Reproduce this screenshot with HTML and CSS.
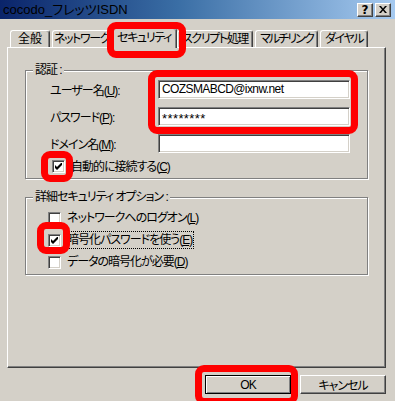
FILE: index.html
```html
<!DOCTYPE html>
<html lang="ja">
<head>
    <meta charset="UTF-8">
    <title>cocodo_フレッツISDN</title>
    <link rel="stylesheet" href="styles.css">
</head>
<body>
<div class="window">
    <!-- タイトルバー -->
    <div class="titlebar">
        <span class="title">cocodo_フレッツISDN</span>
        <div class="title-btns">
            <span class="tbtn">?</span>
            <span class="tbtn tbtn-close">
                <svg width="8" height="7" viewBox="0 0 8 7"><path d="M0 0h2l2 2.5L6 0h2L5 3.5 8 7H6L4 4.5 2 7H0l3-3.5z" fill="#000"/></svg>
            </span>
        </div>
    </div>

    <!-- タブ -->
    <div class="tabs">
        <div class="tab tab-general">全般</div>
        <div class="tab tab-network">ネットワーク</div>
        <div class="tab tab-security active">セキュリティ</div>
        <div class="tab tab-script">スクリプト処理</div>
        <div class="tab tab-multi">マルチリンク</div>
        <div class="tab tab-dial">ダイヤル</div>
    </div>

    <div class="panel">
        <!-- 認証 -->
        <div class="group group-auth">
            <span class="group-title">認証 :</span>
            <div class="field">
                <span class="field-label">ユーザー名(<u>U</u>):</span>
                <div class="input">COZSMABCD@ixnw.net</div>
            </div>
            <div class="field">
                <span class="field-label">パスワード(<u>P</u>):</span>
                <div class="input input-pass">********</div>
            </div>
            <div class="field">
                <span class="field-label">ドメイン名(<u>M</u>):</span>
                <div class="input"></div>
            </div>
            <div class="check-row check-auto">
                <span class="cb checked">
                    <svg width="7" height="7" viewBox="0 0 7 7"><path d="M0 2v3l2 2 5-5V-1L2 4z" fill="#000"/></svg>
                </span>
                <span class="check-label">自動的に接続する(<u>C</u>)</span>
            </div>
        </div>

        <!-- 詳細セキュリティ オプション -->
        <div class="group group-opts">
            <span class="group-title">詳細セキュリティ オプション :</span>
            <div class="check-row">
                <span class="cb"></span>
                <span class="check-label">ネットワークへのログオン(<u>L</u>)</span>
            </div>
            <div class="check-row">
                <span class="cb checked">
                    <svg width="7" height="7" viewBox="0 0 7 7"><path d="M0 2v3l2 2 5-5V-1L2 4z" fill="#000"/></svg>
                </span>
                <span class="check-label focused">暗号化パスワードを使う(<u>E</u>)</span>
            </div>
            <div class="check-row">
                <span class="cb"></span>
                <span class="check-label">データの暗号化が必要(<u>D</u>)</span>
            </div>
        </div>
    </div>

    <div class="buttons">
        <button class="btn btn-default">OK</button>
        <button class="btn">キャンセル</button>
    </div>

    <!-- 赤い囲み -->
    <div class="mark mark-tab"></div>
    <div class="mark mark-inputs"></div>
    <div class="mark mark-auto"></div>
    <div class="mark mark-encrypt"></div>
    <div class="mark mark-ok"></div>
</div>
</body>
</html>
```

FILE: styles.css
```css
body {
    margin: 0;
    padding: 0;
    background-color: #d4d0c8;
}
.window {
    position: relative;
    width: 395px;
    height: 401px;
    overflow: hidden;
    background-color: #d4d0c8;
    font-family: "Liberation Sans", "Noto Sans CJK JP", sans-serif;
    font-size: 12px;
    font-feature-settings: "palt";
    letter-spacing: -1px;
    color: #000;
}
u {
    text-decoration: underline;
    text-underline-offset: 1px;
}

/* title bar */
.titlebar {
    height: 19px;
    display: flex;
    align-items: center;
    justify-content: space-between;
    padding: 0 4px 0 3px;
    background: linear-gradient(to right, #0a246a 0%, #3a6ea5 45%, #a6caf0 100%);
}
.title {
    font-size: 13px;
    line-height: 19px;
    letter-spacing: 0;
}
.title-btns {
    display: flex;
    gap: 2px;
}
.tbtn {
    width: 16px;
    height: 14px;
    box-sizing: border-box;
    display: flex;
    align-items: center;
    justify-content: center;
    background-color: #d4d0c8;
    border-top: 1px solid #fff;
    border-left: 1px solid #fff;
    border-right: 1px solid #404040;
    border-bottom: 1px solid #404040;
    box-shadow: inset -1px -1px 0 #808080;
    font-family: "DejaVu Sans", sans-serif;
    font-weight: bold;
    font-size: 12px;
    line-height: 12px;
    letter-spacing: 0;
}

/* tabs */
.tabs {
    position: relative;
    z-index: 2;
    display: flex;
    align-items: flex-end;
    height: 19px;
    margin: 9px 0 0 10px;
}
.tab {
    height: 17px;
    box-sizing: border-box;
    padding: 1px 0 0;
    text-align: center;
    white-space: nowrap;
    line-height: 15px;
    letter-spacing: -1.4px;
    border-top: 1px solid #fff;
    border-left: 1px solid #fff;
    border-right: 1px solid #404040;
    border-radius: 3px 3px 0 0;
    box-shadow: inset -1px 0 0 #808080;
    margin-right: 2px;
}
.tab-general { width: 40px; letter-spacing: 0; }
.tab-network { width: 59px; }
.tab-script { width: 76px; }
.tab-multi { width: 63px; letter-spacing: -1.9px; }
.tab-dial { width: 48px; }
.tab.active {
    height: 20px;
    width: 66px;
    margin: 0 0 -1px -2px;
    padding-top: 2px;
    background-color: #d4d0c8;
}

/* panel */
.panel {
    position: relative;
    z-index: 1;
    width: 379px;
    height: 321px;
    box-sizing: border-box;
    margin-left: 7px;
    padding: 22px 0 0 17px;
    border-top: 1px solid #fff;
    border-left: 1px solid #fff;
    border-right: 1px solid #404040;
    border-bottom: 1px solid #404040;
    box-shadow: inset -1px -1px 0 #808080;
}

/* group boxes */
.group {
    position: relative;
    width: 343px;
    box-sizing: border-box;
    border: 1px solid #808080;
    box-shadow: inset 1px 1px 0 #fff, 1px 1px 0 #fff;
}
.group-title {
    position: absolute;
    top: -8px;
    left: 7px;
    padding: 0 2px;
    line-height: 14px;
    background-color: #d4d0c8;
}
.group-auth {
    height: 109px;
    padding: 5px 0 0 24px;
}
.group-opts {
    height: 78px;
    margin-top: 18px;
    padding: 9px 0 0 22px;
}

.field {
    display: flex;
    align-items: center;
    height: 27px;
}
.field-label {
    width: 108px;
}
.input {
    width: 192px;
    height: 19px;
    box-sizing: border-box;
    padding: 1px 3px 0;
    line-height: 15px;
    letter-spacing: -0.6px;
    background-color: #fff;
    border-top: 1px solid #808080;
    border-left: 1px solid #808080;
    border-right: 1px solid #fff;
    border-bottom: 1px solid #fff;
    box-shadow: inset 1px 1px 0 #404040, inset -1px -1px 0 #d4d0c8;
}
.input-pass {
    font-size: 13px;
    letter-spacing: 0.4px;
    line-height: 17px;
    padding-top: 2px;
}

/* checkboxes */
.check-row {
    display: flex;
    align-items: center;
    height: 22px;
}
.check-auto {
    height: 19px;
    margin-left: 2px;
}
.cb {
    width: 13px;
    height: 13px;
    box-sizing: border-box;
    display: flex;
    align-items: center;
    justify-content: center;
    margin-right: 5px;
    background-color: #fff;
    border-top: 1px solid #808080;
    border-left: 1px solid #808080;
    border-right: 1px solid #fff;
    border-bottom: 1px solid #fff;
    box-shadow: inset 1px 1px 0 #404040, inset -1px -1px 0 #d4d0c8;
}
.check-label {
    line-height: 16px;
    padding: 0 1px;
}
.check-label.focused {
    outline: 1px dotted #000;
}

/* buttons */
.buttons {
    display: flex;
    justify-content: flex-end;
    gap: 9px;
    margin: 7px 9px 0 0;
}
.btn {
    width: 86px;
    height: 19px;
    box-sizing: border-box;
    padding: 0;
    font-family: inherit;
    font-size: 12px;
    font-feature-settings: "palt";
    letter-spacing: -1px;
    color: #000;
    background-color: #d4d0c8;
    border-top: 1px solid #fff;
    border-left: 1px solid #fff;
    border-right: 1px solid #404040;
    border-bottom: 1px solid #404040;
    box-shadow: inset -1px -1px 0 #808080;
}
.btn-default {
    border: 1px solid #000;
    box-shadow: inset 1px 1px 0 #fff, inset -1px -1px 0 #808080;
}

/* red highlight marks */
.mark {
    position: absolute;
    z-index: 5;
    box-sizing: border-box;
    border: 7px solid #ff0000;
    border-radius: 9px;
    filter: blur(0.7px);
}
.mark-tab {
    left: 107px;
    top: 22px;
    width: 79px;
    height: 36px;
}
.mark-inputs {
    left: 148px;
    top: 70px;
    width: 210px;
    height: 64px;
}
.mark-auto {
    left: 41px;
    top: 151px;
    width: 32px;
    height: 31px;
}
.mark-encrypt {
    left: 37px;
    top: 222px;
    width: 33px;
    height: 32px;
}
.mark-ok {
    left: 195px;
    top: 365px;
    width: 103px;
    height: 40px;
}
```
